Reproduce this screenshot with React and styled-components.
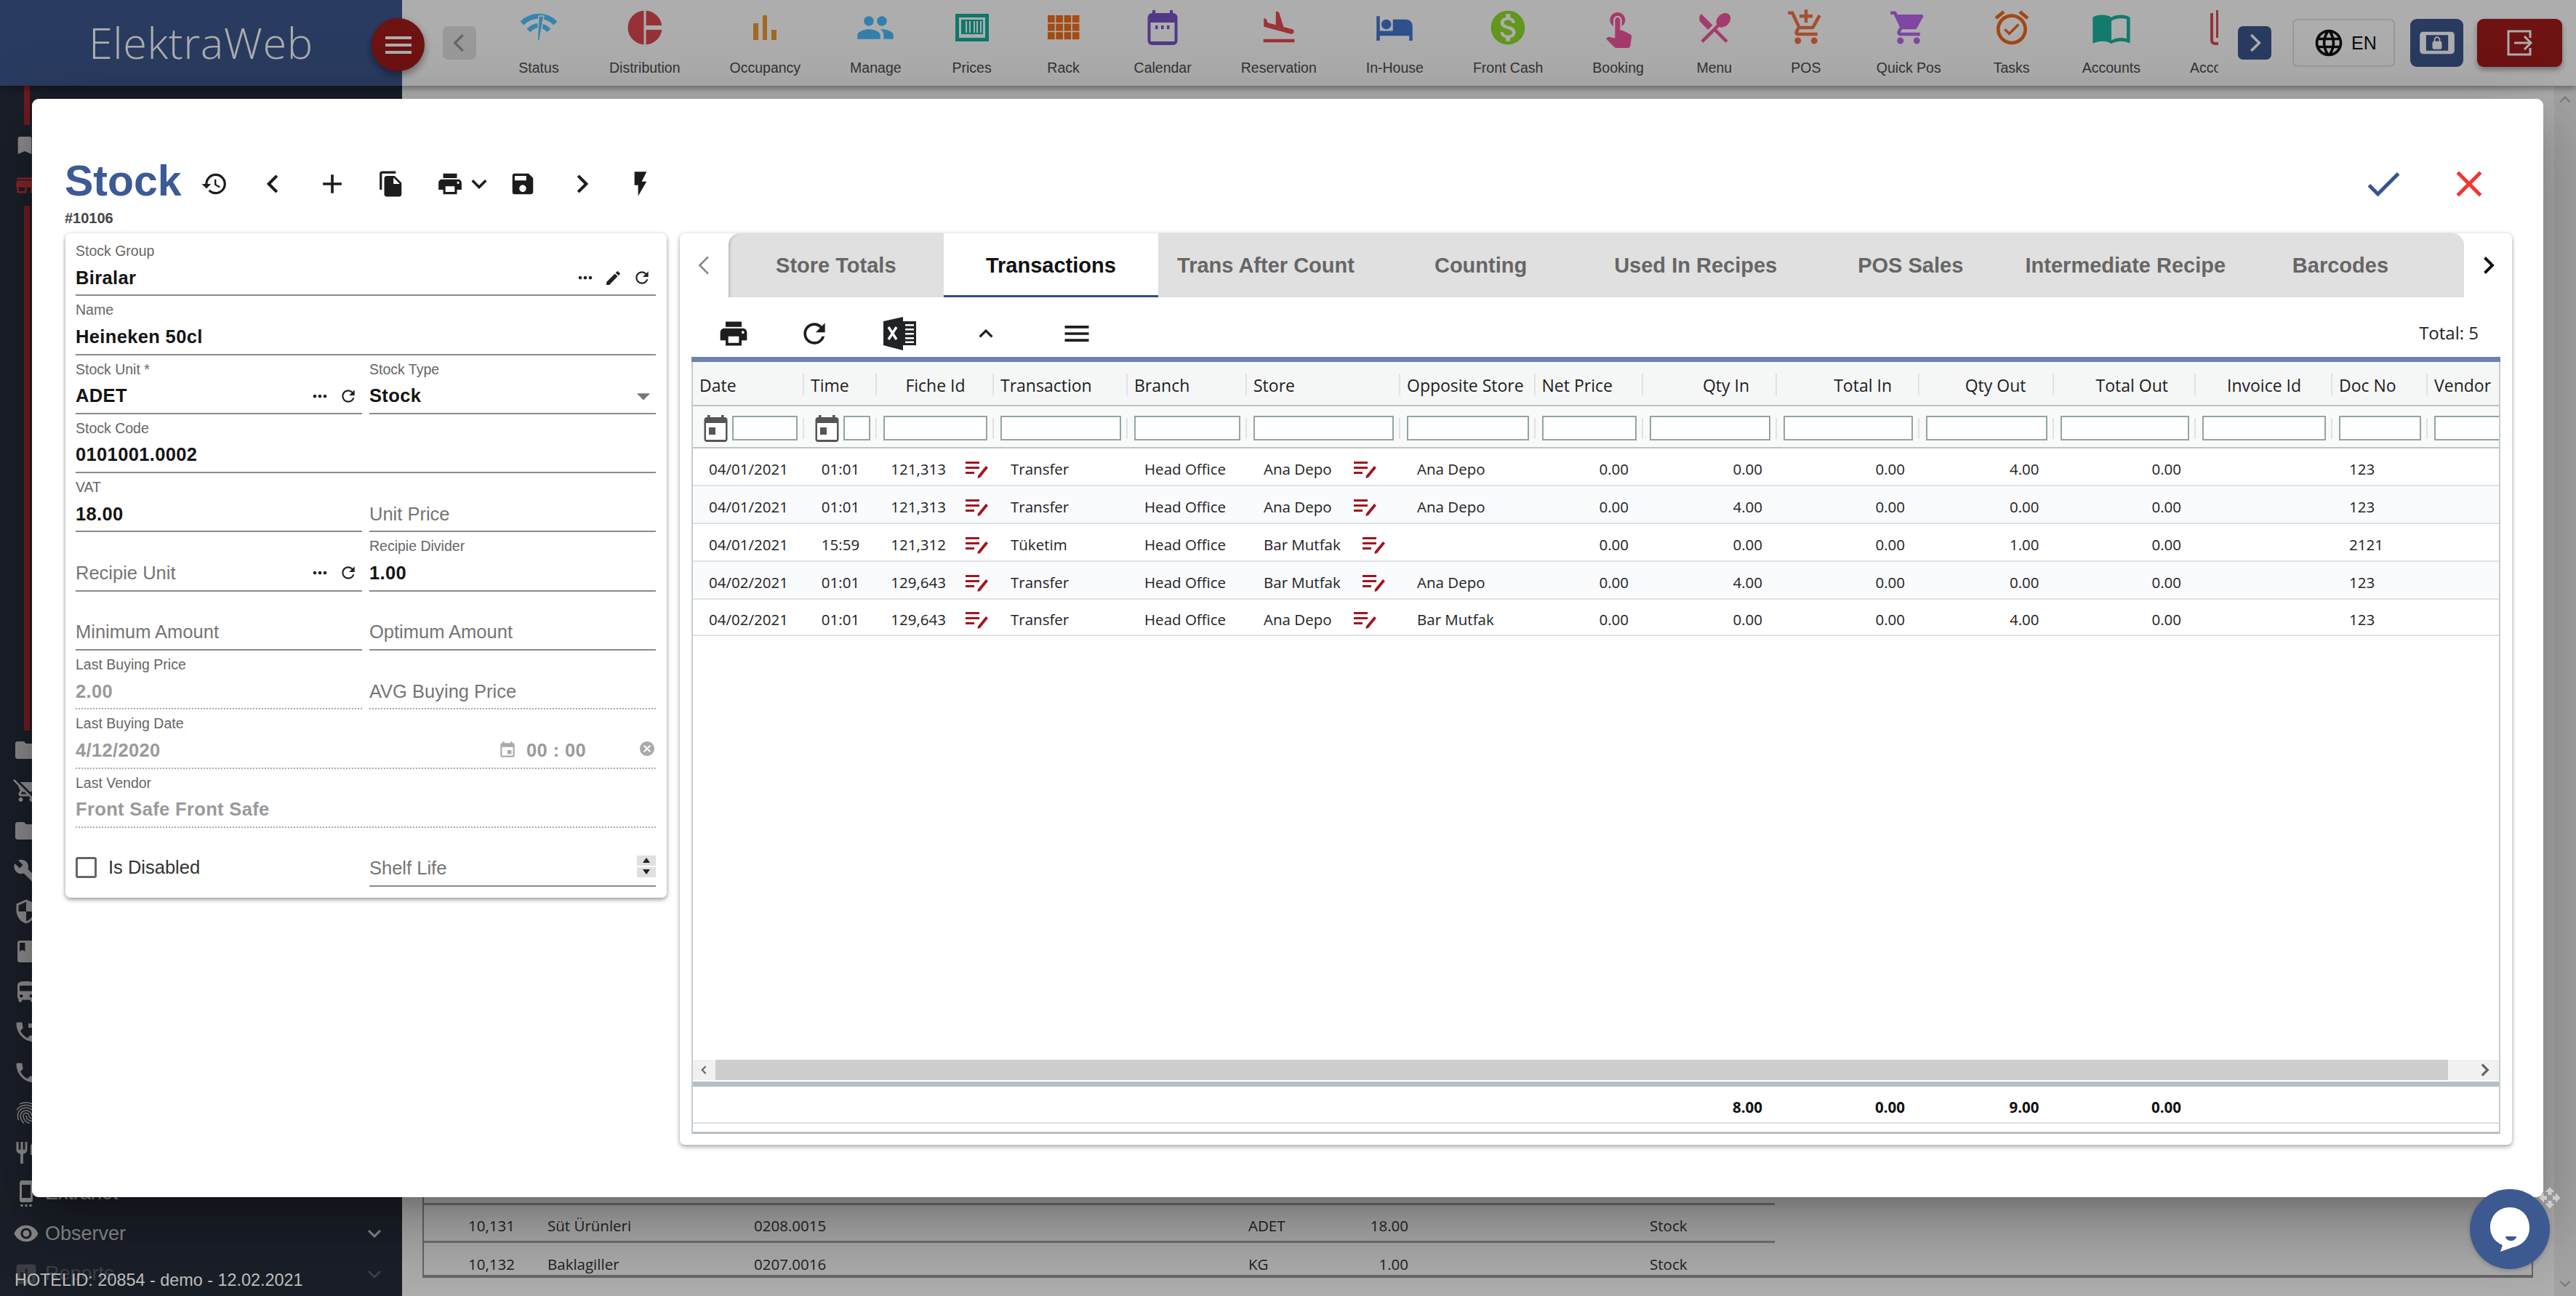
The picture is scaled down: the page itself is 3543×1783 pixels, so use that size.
import React from 'react';
import styled, { createGlobalStyle } from 'styled-components';
import {
  MdMenu, MdPeople, MdFlightLand, MdHotel, MdMonetizationOn, MdTouchApp, MdRestaurantMenu,
  MdAddShoppingCart, MdShoppingCart, MdAlarmOn, MdImportContacts, MdLanguage, MdScreenLockLandscape,
  MdHistory, MdAdd, MdFileCopy, MdPrint, MdKeyboardArrowDown, MdKeyboardArrowUp, MdSave, MdFlashOn, MdCheck, MdClose,
  MdMoreHoriz, MdEdit, MdRefresh, MdArrowDropDown, MdEvent, MdCancel, MdBookmark, MdStore, MdFolder,
  MdRemoveShoppingCart, MdBuild, MdSecurity, MdBook, MdDirectionsBus, MdPhoneForwarded, MdPhone, MdFingerprint,
  MdRestaurant, MdSettingsCell, MdVisibility, MdAssessment, MdOpenWith
} from 'react-icons/md';

const GlobalStyle = createGlobalStyle`
  html, body { margin: 0; padding: 0; height: 100%; overflow: hidden; background: #fff; }
  #root { height: 100%; }
  * { box-sizing: border-box; }
  body { font-family: "Liberation Sans", Arial, sans-serif; color: #222; }
`;

const Shell = styled.div`
  position: relative; width: 3543px; height: 1783px; overflow: hidden;
  display: flex; flex-direction: column; background: #fff;
`;
const TopBar = styled.header`
  height: 118px; flex: none; display: flex; background: #fff; position: relative; z-index: 2;
  box-shadow: 0 3px 9px rgba(0,0,0,.4);
`;
const Brand = styled.div`
  width: 553px; flex: none; background: #3f5890; position: relative;
  display: flex; align-items: center; padding: 0 0 4px 122px;
`;
const BrandName = styled.div`
  font-family: "Open Sans", sans-serif; font-weight: 300; font-size: 59.5px; color: #fff; letter-spacing: .5px;
`;
const Burger = styled.div`
  position: absolute; left: 511px; top: 25px; width: 73px; height: 73px; border-radius: 50%;
  background: #a21b1b; display: flex; align-items: center; justify-content: center; color: #fff;
  box-shadow: 0 5px 12px rgba(0,0,0,.4);
`;
const NavArea = styled.nav`
  flex: 1; min-width: 0; display: flex; align-items: center; padding: 0 19px 0 56px;
`;
const PagerButton = styled.div`
  width: 46px; height: 46px; flex: none; border-radius: 7px; display: flex; align-items: center; justify-content: center;
  margin-bottom: 0; background: ${p => (p.$on ? '#3f5890' : '#e4e4e4')}; color: ${p => (p.$on ? '#fff' : '#999')};
`;
const NavScroller = styled.div`
  flex: 1; min-width: 0; height: 118px; overflow: hidden; display: flex; margin: 0 27px 0 23px;
`;
const NavItem = styled.div`
  flex: none; padding: 14px 34px 0; display: flex; flex-direction: column; align-items: center;
`;
const NavIcon = styled.div`
  height: 48px; width: 58px; display: flex; align-items: center; justify-content: center; color: ${p => p.$c};
`;
const NavLabel = styled.div`
  margin-top: 20px; font-size: 19.5px; line-height: 22px; color: #4d4d4d; white-space: nowrap;
`;
const LangButton = styled.div`
  width: 141px; height: 66px; flex: none; margin: 0 21px 0 29px; border: 2px solid #e2e2e2; border-radius: 7px;
  display: flex; align-items: center; gap: 9px; padding-left: 28px; color: #111; font-size: 25px;
`;
const LockButton = styled.div`
  width: 73px; height: 66px; flex: none; margin-right: 19px; border-radius: 9px; background: #3f5890; color: #fff;
  display: flex; align-items: center; justify-content: center;
`;
const LogoutButton = styled.div`
  width: 117px; height: 66px; flex: none; border-radius: 9px; background: #a21b1b; color: #fff;
  display: flex; align-items: center; justify-content: center; box-shadow: 0 4px 7px rgba(0,0,0,.35);
`;

const Body = styled.div`flex: 1; min-height: 0; display: flex;`;
const Sidebar = styled.aside`
  width: 553px; flex: none; background: #282e3c; display: flex; flex-direction: column; color: #cdcdcd; overflow: hidden;
`;
const RedLine = styled.div`
  width: 8px; margin-left: 33px; height: ${p => p.$h}px; background: #a52830; flex: none;
`;
const MenuRow = styled.div`
  height: 55.4px; flex: none; display: flex; align-items: center; padding: 0 20px 0 18px; gap: 8px;
  color: ${p => p.$c || 'inherit'}; opacity: ${p => p.$dim ? .3 : 1};
`;
const MenuText = styled.span`font-size: 27px; flex: 1;`;
const HotelId = styled.div`
  position: absolute; left: 20px; top: 1746px; font-size: 23.4px; line-height: 30px; color: #bdbdbd; z-index: 30;
`;

const Content = styled.main`flex: 1; min-width: 0; display: flex;`;
const ContentMain = styled.div`
  flex: 1; min-width: 0; display: flex; flex-direction: column; justify-content: flex-end;
  padding: 0 29px 25px 28px;
`;
const BackTable = styled.div`
  border-left: 2px solid #999; border-right: 2px solid #999; border-bottom: 4px solid #999;
`;
const BackRow = styled.div`
  width: 1858px; height: ${p => (p.$last ? 44 : 52)}px; display: grid; align-items: center;
  grid-template-columns: 125px 329px 680px 100px 120px 330px;
  border-bottom: ${p => (p.$last ? '0' : '3px solid #aaa')};
  padding-top: ${p => (p.$last ? 14 : 6)}px;
  font-family: "Open Sans", sans-serif; font-size: 20.5px; color: #333;
`;
const BackCell = styled.div`
  text-align: ${p => (p.$right ? 'right' : 'left')}; padding-left: ${p => p.$pl || 0}px; white-space: nowrap;
`;
const ScrollTrack = styled.div`
  width: 30px; flex: none; background: #f1f1f1; display: flex; flex-direction: column; justify-content: space-between;
  align-items: center; padding: 4px 0 2px; color: #bbb;
`;

const Overlay = styled.div`position: absolute; inset: 0; background: rgba(0,0,0,.32); z-index: 10;`;
const Dialog = styled.section`
  position: absolute; left: 44px; top: 136px; width: 3454px; height: 1511px; z-index: 20; background: #fff; border-radius: 9px;
  padding: 83px 43px 0 45px; display: flex; flex-direction: column;
  box-shadow: 0 25px 34px -16px rgba(0,0,0,.2), 0 54px 86px 7px rgba(0,0,0,.14), 0 20px 104px 18px rgba(0,0,0,.12);
`;
const DialogHead = styled.div`display: flex; align-items: center; height: 68px; flex: none;`;
const Title = styled.h1`
  margin: 0 5px 8px 0; font-size: 59px; line-height: 68px; font-weight: 700; color: #3c5a96; width: 160px; white-space: nowrap;
`;
const IconButton = styled.div`
  width: ${p => p.$w || 81}px; height: 68px; flex: none; display: flex; align-items: center; justify-content: center;
  color: ${p => p.$c || '#1c1c1c'};
`;
const HeadSpacer = styled.div`flex: 1;`;
const RecordId = styled.div`
  height: 24px; margin: 1px 0 9px; font-size: 20px; line-height: 24px; font-weight: 700; color: #444; flex: none;
`;
const Columns = styled.div`flex: 1; min-height: 0; display: flex; align-items: flex-start; gap: 18px;`;

const FormCard = styled.div`
  width: 827px; height: 914px; flex: none; margin-left: 1px; background: #fff; border-radius: 7px; padding: 5px 15px 0 14px;
  box-shadow: 0 3px 6px rgba(0,0,0,.35), 0 0 5px rgba(0,0,0,.1);
`;
const FormGrid = styled.div`display: grid; grid-template-columns: 1fr 1fr; column-gap: 10px;`;
const Field = styled.div`
  height: 81.3px; min-width: 0; display: flex; flex-direction: column;
  grid-column: ${p => (p.$wide ? 'span 2' : 'auto')};
  border-bottom: ${p => (p.$bare ? '0' : p.$off ? '2.5px dotted #aaa' : '2.5px solid #8a8a8a')};
`;
const FieldLabel = styled.div`height: 39px; line-height: 39px; font-size: 19.5px; color: #666; white-space: nowrap;`;
const FieldLine = styled.div`height: 34px; display: flex; align-items: center; min-width: 0;`;
const FieldValue = styled.div`
  flex: 1; min-width: 0; font-size: 25.5px; letter-spacing: ${p => (p.$hint ? 0 : .35)}px; white-space: nowrap;
  font-weight: ${p => (p.$hint ? 400 : 700)};
  color: ${p => (p.$hint ? '#757575' : p.$off ? '#9a9a9a' : '#141414')};
`;
const Adorn = styled.div`
  width: 39px; height: 34px; flex: none; display: flex; align-items: center; justify-content: center; color: #222;
`;
const SelectArrow = styled.div`margin-right: -5px; display: flex; color: #777;`;
const DateCal = styled.div`width: 26px; flex: none; margin-right: 13px; display: flex; color: #aaa;`;
const TimeText = styled.div`width: 154px; font-size: 25.5px; font-weight: 700; letter-spacing: .4px; color: #9a9a9a; white-space: pre;`;
const ClearIcon = styled.div`display: flex; color: #aaa; margin-top: -5px;`;
const CheckLine = styled.div`display: flex; align-items: center; gap: 16px; height: 100%; padding-top: 28px;`;
const CheckBox = styled.div`width: 29px; height: 29px; border: 3.5px solid #666; border-radius: 3px;`;
const CheckText = styled.div`font-size: 25.5px; color: #333;`;
const Spinner = styled.div`width: 26px; height: 30px; flex: none; display: flex; flex-direction: column; gap: 2px; margin-top: -6px;`;
const SpinPart = styled.div`
  flex: 1; background: #e0e0e0; display: flex; align-items: center; justify-content: center;
  &::before {
    content: ""; border-left: 5px solid transparent; border-right: 5px solid transparent;
    ${p => (p.$up ? 'border-bottom: 7px solid #222;' : 'border-top: 7px solid #222;')}
  }
`;

const GridCard = styled.div`
  flex: 1; min-width: 0; height: 1254px; background: #fff; border-radius: 7px; display: flex; flex-direction: column;
  box-shadow: 0 3px 6px rgba(0,0,0,.3), 0 0 5px rgba(0,0,0,.1);
`;
const TabsRow = styled.div`height: 88px; flex: none; display: flex;`;
const TabArrow = styled.div`
  width: ${p => p.$w}px; flex: none; display: flex; align-items: center; justify-content: center; padding-bottom: 0; color: ${p => p.$c};
`;
const TabStrip = styled.div`
  flex: 1; min-width: 0; display: flex; background: #e0e0e0; border-radius: 16px 16px 0 0; overflow: hidden;
  box-shadow: inset 4px 0 4px -3px rgba(0,0,0,.25);
`;
const Tab = styled.div`
  width: 295.6px; flex: none; display: flex; align-items: center; justify-content: center; padding-top: 3px;
  font-size: 29px; font-weight: 700; white-space: nowrap;
  color: ${p => (p.$on ? '#111' : '#666')}; background: ${p => (p.$on ? '#fff' : 'transparent')};
  border-bottom: 3px solid ${p => (p.$on ? '#2f4d8e' : 'transparent')};
`;
const GridBox = styled.div`flex: 1; min-height: 0; display: flex; flex-direction: column; margin: 0 16px 15px;`;
const GridTools = styled.div`height: 82px; flex: none; display: flex; align-items: center; padding-top: 18px; color: #1d1d1d;`;
const ToolBox = styled.div`width: ${p => p.$w}px; flex: none; display: flex; align-items: center; justify-content: center;`;
const TotalText = styled.div`
  margin-left: auto; padding: 0 30px 4px 0; font-family: "Open Sans", sans-serif; font-size: 24px; color: #222;
`;
const Band = styled.div`height: ${p => p.$h}px; flex: none; background: ${p => p.$c};`;
const GridFrame = styled.div`
  flex: 1; min-height: 0; display: flex; flex-direction: column; overflow: hidden;
  border-left: 2px solid #c6cdd1; border-right: 2px solid #c6cdd1;
  font-family: "Open Sans", sans-serif;
`;
const COLS = [153, 100, 161, 184, 164, 211, 185.5, 148.5, 184, 196, 184.5, 195.5, 188, 131, 200];
const template = COLS.map(w => `${w}px`).join(' ');
const GridRow = styled.div`
  display: grid; grid-template-columns: ${template}; flex: none;
  height: ${p => p.$h}px; background: ${p => p.$bg || '#fff'};
  border-bottom: ${p => p.$line || '0'};
`;
const justify = { left: 'flex-start', right: 'flex-end', center: 'center' };
const HeadCell = styled.div`
  position: relative; display: flex; align-items: center; white-space: nowrap; overflow: hidden;
  justify-content: ${p => justify[p.$a]};
  padding: 4px ${p => (p.$a === 'right' ? 38 : 0)}px 0 ${p => (p.$a === 'left' ? 9 : 0)}px;
  font-size: 23px; color: #1d1d1d;
  &::after { content: ""; position: absolute; right: 0; top: 16px; height: 30px; width: 2px; background: #e0e3e5; }
`;
const FilterCell = styled.div`
  position: relative; display: flex; align-items: center; gap: 6px; padding: 4px 9px 0 ${p => (p.$cal ? 14.5 : 9)}px;
  &::after { content: ""; position: absolute; right: 0; top: 16px; height: 29px; width: 2px; background: #e0e3e5; }
`;
const FilterInput = styled.input`
  flex: 1; min-width: 0; height: 34px; border: 2px solid #92a5a5; background: #fff; padding: 0; outline: none; border-radius: 0;
`;
const Cell = styled.div`
  display: flex; align-items: center; white-space: nowrap; overflow: hidden;
  justify-content: ${p => justify[p.$a]};
  padding: 6px ${p => (p.$a === 'right' ? 20 : 0)}px 0 ${p => (p.$a === 'left' ? 23 : 0)}px;
  font-size: 20.5px; color: #222;
`;
const IdCell = styled(Cell)`padding-right: 8px;`;
const EditGlyph = styled.svg`width: 31px; height: 23px; flex: none; margin-left: ${p => p.$ml}px; margin-top: 3px;`;
const GridBlank = styled.div`flex: 1; min-height: 0;`;
const Scroller = styled.div`height: 28px; flex: none; display: flex; background: #f1f1f1; margin-bottom: 2px;`;
const ScrollEnd = styled.div`
  width: ${p => p.$w}px; flex: none; display: flex; align-items: center; justify-content: ${p => p.$j}; padding: 0 7px; color: #666;
`;
const ScrollThumb = styled.div`flex: 1; background: #cdcdcd;`;
const TotalCell = styled(Cell)`font-weight: 700; color: #111;`;

const ChatButton = styled.div`
  position: absolute; left: 3396.5px; top: 1636px; width: 110px; height: 110px; border-radius: 50%; background: #3d5a90;
  z-index: 40; display: flex; align-items: center; justify-content: center; box-shadow: 0 2px 6px rgba(0,0,0,.2);
`;
const MoveHandle = styled.div`
  position: absolute; left: 3491px; top: 1632px; z-index: 41; display: flex; color: #ccc;
`;

const Chevron = ({ dir = 'left', size = 36, sw = 2.4, color = 'currentColor' }) => {
  const pts = { left: '15 5 8 12 15 19', right: '9 5 16 12 9 19' }[dir];
  return (
    <svg width={size} height={size} viewBox="0 0 24 24" fill="none" stroke={color} strokeWidth={sw}>
      <polyline points={pts} />
    </svg>
  );
};

const StatusIcon = () => (
  <svg width="52" height="40" viewBox="0 0 52 40">
    <path d="M3 14 C16 1 36 1 49 14" fill="none" stroke="#4ec4ff" strokeWidth="7" />
    <path d="M12 24 C20 15 32 15 40 24" fill="none" stroke="#4ec4ff" strokeWidth="6.5" />
    <path d="M26 4 L33 4 L27 38 L24 38 Z" fill="#4ec4ff" stroke="#fff" strokeWidth="1.6" />
  </svg>
);
const DistributionIcon = () => (
  <svg width="48" height="48" viewBox="0 0 48 48">
    <circle cx="24" cy="24" r="23.5" fill="#dc4a52" />
    <rect x="22.5" y="0" width="3" height="48" fill="#fff" />
    <rect x="24" y="21" width="24" height="6" fill="#fff" />
  </svg>
);
const OccupancyIcon = () => (
  <svg width="34" height="34" viewBox="0 0 34 34" fill="#f09a2e">
    <rect x="1" y="11" width="7" height="23" /><rect x="14" y="0" width="6" height="34" /><rect x="26" y="20" width="7" height="14" />
  </svg>
);
const PricesIcon = () => (
  <svg width="46" height="38" viewBox="0 0 46 38" fill="#15b09e">
    <path d="M0 0H46V38H0Z M5 5V33H41V5Z" fillRule="evenodd" />
    <rect x="8" y="8" width="30" height="20" />
    <g fill="#fff">
      <rect x="14" y="10" width="2" height="16" />
      <rect x="19" y="10" width="2" height="16" /><rect x="25" y="10" width="2" height="16" />
      <rect x="29" y="10" width="2" height="16" /><rect x="34" y="10" width="2" height="16" />
    </g>
  </svg>
);
const RackIcon = () => {
  const bricks = [];
  [0, 1, 2].forEach(r => [0, 1, 2, 3].forEach(c => bricks.push(<rect key={`${r}${c}`} x={c * 11.3} y={r * 11.6} width="9.6" height="10" />)));
  return <svg width="44" height="34" viewBox="0 0 44 34" fill="#f56f1c">{bricks}</svg>;
};
const CalendarIcon = () => (
  <svg width="42" height="48" viewBox="0 0 42 48">
    <rect x="7" y="0" width="4" height="8" fill="#7a55c8" /><rect x="31" y="0" width="4" height="8" fill="#7a55c8" />
    <rect x="0.5" y="4" width="41" height="44" rx="6" fill="#7a55c8" />
    <rect x="4.5" y="17" width="33" height="26" fill="#fff" />
    <g fill="#7a55c8"><rect x="11" y="21" width="3.5" height="5" /><rect x="19" y="21" width="3.5" height="5" /><rect x="27" y="21" width="3.5" height="5" /></g>
  </svg>
);
const AccountingIcon = () => (
  <svg width="48" height="48" viewBox="0 0 48 48" fill="none" stroke="#dc4a52" strokeWidth="4">
    <path d="M6 4 V41 Q6 46 11 46 H48" /><path d="M14 0 V36 H48" />
  </svg>
);
const ChatGlyph = () => (
  <svg width="58" height="64" viewBox="0 0 58 64">
    <path d="M29 2 C45 2 56 14 56 30 C56 45 45 55 33 57 L16 63 L19 54 C9 50 2 41 2 30 C2 14 13 2 29 2 Z" fill="#fff" />
    <path d="M23 42 H38 C37 50 24 50 23 42 Z" fill="#3d5a90" />
  </svg>
);
const LogoutGlyph = () => (
  <svg width="36" height="36" viewBox="0 0 36 36" fill="none" stroke="#fff" strokeWidth="3">
    <path d="M32 11 V2 H2 V34 H32 V25" /><path d="M10 18 H32" /><path d="M24 9 L33 18 L24 27" />
  </svg>
);
const ExcelGlyph = () => (
  <svg width="46" height="46" viewBox="0 0 46 46">
    <path d="M0 6 L27 0 V46 L0 39 Z" fill="#1f2326" />
    <path d="M7 14 L18 31 M18 14 L7 31" stroke="#fff" strokeWidth="3.4" fill="none" />
    <rect x="27" y="6" width="18" height="33" fill="#1f2326" />
    <g fill="#fff"><rect x="30" y="10" width="12" height="2.5" /><rect x="30" y="16" width="12" height="2.5" /><rect x="30" y="22" width="12" height="2.5" /><rect x="30" y="28" width="12" height="2.5" /><rect x="30" y="33.5" width="12" height="2.5" /></g>
  </svg>
);
const FilterCalendar = () => (
  <svg width="33" height="37" viewBox="0 0 33 37" style={{ flex: 'none' }}>
    <rect x="5" y="0" width="3.5" height="6" fill="#555" /><rect x="24" y="0" width="3.5" height="6" fill="#555" />
    <rect x="0.5" y="3" width="32" height="34" rx="4" fill="#555" />
    <rect x="3" y="11" width="27" height="23" fill="#fff" />
    <rect x="7" y="17" width="9" height="10" fill="#555" />
  </svg>
);
const EditIcon = ({ ml = 0 }) => (
  <EditGlyph $ml={ml} viewBox="0 0 31 23">
    <g fill="#a2141e">
      <rect x="0" y="0" width="19" height="3" /><rect x="0" y="7" width="19" height="3" /><rect x="0" y="14" width="12" height="3" />
      <path d="M28 6 L31 8.5 L20 22 L16.5 23 L17 19.5 Z" />
    </g>
  </EditGlyph>
);

const navItems = [
  ['Status', '', <StatusIcon />],
  ['Distribution', '', <DistributionIcon />],
  ['Occupancy', '', <OccupancyIcon />],
  ['Manage', '#4dbdff', <MdPeople size={54} />],
  ['Prices', '', <PricesIcon />],
  ['Rack', '', <RackIcon />],
  ['Calendar', '', <CalendarIcon />],
  ['Reservation', '#e84a52', <MdFlightLand size={54} />],
  ['In-House', '#4577cf', <MdHotel size={54} />],
  ['Front Cash', '#92dd2c', <MdMonetizationOn size={56} />],
  ['Booking', '#f4579f', <MdTouchApp size={56} />],
  ['Menu', '#f4579f', <MdRestaurantMenu size={54} />],
  ['POS', '#f57348', <MdAddShoppingCart size={54} />],
  ['Quick Pos', '#bb68f0', <MdShoppingCart size={54} />],
  ['Tasks', '#f06a1c', <MdAlarmOn size={56} />],
  ['Accounts', '#1cb5a3', <MdImportContacts size={56} />],
  ['Accounting', '', <AccountingIcon />],
];

const menuIcons = [MdFolder, MdRemoveShoppingCart, MdFolder, MdBuild, MdSecurity, MdBook, MdDirectionsBus, MdPhoneForwarded, MdPhone, MdFingerprint, MdRestaurant];

const tabs = ['Store Totals', 'Transactions', 'Trans After Count', 'Counting', 'Used In Recipes', 'POS Sales', 'Intermediate Recipe', 'Barcodes'];

const heads = [
  ['Date', 'left'], ['Time', 'left'], ['Fiche Id', 'center'], ['Transaction', 'left'], ['Branch', 'left'], ['Store', 'left'],
  ['Opposite Store', 'left'], ['Net Price', 'left'], ['Qty In', 'right'], ['Total In', 'right'], ['Qty Out', 'right'],
  ['Total Out', 'right'], ['Invoice Id', 'center'], ['Doc No', 'left'], ['Vendor', 'left'],
];

const rows = [
  ['04/01/2021', '01:01', '121,313', 'Transfer', 'Ana Depo', 'Ana Depo', '0.00', '0.00', '0.00', '4.00', '0.00', '123'],
  ['04/01/2021', '01:01', '121,313', 'Transfer', 'Ana Depo', 'Ana Depo', '0.00', '4.00', '0.00', '0.00', '0.00', '123'],
  ['04/01/2021', '15:59', '121,312', 'Tüketim', 'Bar Mutfak', '', '0.00', '0.00', '0.00', '1.00', '0.00', '2121'],
  ['04/02/2021', '01:01', '129,643', 'Transfer', 'Bar Mutfak', 'Ana Depo', '0.00', '4.00', '0.00', '0.00', '0.00', '123'],
  ['04/02/2021', '01:01', '129,643', 'Transfer', 'Ana Depo', 'Bar Mutfak', '0.00', '0.00', '0.00', '4.00', '0.00', '123'],
];

const LookupTools = ({ edit }) => (
  <>
    <Adorn><MdMoreHoriz size={28} /></Adorn>
    {edit && <Adorn><MdEdit size={25} /></Adorn>}
    <Adorn><MdRefresh size={26} /></Adorn>
  </>
);

const TextField = ({ label, value, hint, off, wide, children }) => (
  <Field $off={off} $wide={wide}>
    <FieldLabel>{label}</FieldLabel>
    <FieldLine>
      <FieldValue $hint={hint} $off={off}>{value || hint}</FieldValue>
      {children}
    </FieldLine>
  </Field>
);

export default function App() {
  return (
    <Shell>
      <GlobalStyle />
      <TopBar>
        <Brand>
          <BrandName>ElektraWeb</BrandName>
          <Burger><MdMenu size={48} /></Burger>
        </Brand>
        <NavArea>
          <PagerButton><Chevron size={38} sw={2.2} /></PagerButton>
          <NavScroller>
            {navItems.map(([label, c, icon]) => (
              <NavItem key={label}>
                <NavIcon $c={c}>{icon}</NavIcon>
                <NavLabel>{label}</NavLabel>
              </NavItem>
            ))}
          </NavScroller>
          <PagerButton $on><Chevron dir="right" size={38} sw={2.2} /></PagerButton>
          <LangButton><MdLanguage size={44} style={{ marginLeft: -2 }} />EN</LangButton>
          <LockButton><MdScreenLockLandscape size={52} /></LockButton>
          <LogoutButton><LogoutGlyph /></LogoutButton>
        </NavArea>
      </TopBar>

      <Body>
        <Sidebar>
          <RedLine $h={54} />
          <MenuRow><MdBookmark size={32} /></MenuRow>
          <MenuRow $c="#c4363e"><MdStore size={32} /></MenuRow>
          <RedLine $h={722} />
          {menuIcons.map((Icon, i) => (
            <MenuRow key={i}><Icon size={36} /></MenuRow>
          ))}
          <MenuRow><MdSettingsCell size={36} /><MenuText>Extranet</MenuText></MenuRow>
          <MenuRow><MdVisibility size={36} /><MenuText>Observer</MenuText><MdKeyboardArrowDown size={36} /></MenuRow>
          <MenuRow $dim><MdAssessment size={36} /><MenuText>Reports</MenuText><MdKeyboardArrowDown size={36} /></MenuRow>
        </Sidebar>
        <Content>
          <ContentMain>
            <BackTable>
              <BackRow />
              <BackRow>
                <BackCell $right>10,131</BackCell><BackCell $pl={45}>Süt Ürünleri</BackCell><BackCell>0208.0015</BackCell>
                <BackCell>ADET</BackCell><BackCell $right>18.00</BackCell><BackCell $pl={332}>Stock</BackCell>
              </BackRow>
              <BackRow $last>
                <BackCell $right>10,132</BackCell><BackCell $pl={45}>Baklagiller</BackCell><BackCell>0207.0016</BackCell>
                <BackCell>KG</BackCell><BackCell $right>1.00</BackCell><BackCell $pl={332}>Stock</BackCell>
              </BackRow>
            </BackTable>
          </ContentMain>
          <ScrollTrack><MdKeyboardArrowUp size={30} /><MdKeyboardArrowDown size={30} /></ScrollTrack>
        </Content>
      </Body>

      <HotelId>HOTELID: 20854 - demo - 12.02.2021</HotelId>
      <Overlay />

      <Dialog>
        <DialogHead>
          <Title>Stock</Title>
          <IconButton><MdHistory size={38} /></IconButton>
          <IconButton><Chevron size={38} sw={2.6} /></IconButton>
          <IconButton><MdAdd size={44} /></IconButton>
          <IconButton><MdFileCopy size={38} /></IconButton>
          <IconButton $w={100}><MdPrint size={38} /><MdKeyboardArrowDown size={42} style={{ marginRight: -24 }} /></IconButton>
          <IconButton $w={81}><MdSave size={38} /></IconButton>
          <IconButton><Chevron dir="right" size={38} sw={2.6} /></IconButton>
          <IconButton><MdFlashOn size={40} /></IconButton>
          <HeadSpacer />
          <IconButton $w={118} $c="#34548f"><MdCheck size={60} /></IconButton>
          <IconButton $w={118} $c="#f2352e"><MdClose size={60} /></IconButton>
        </DialogHead>
        <RecordId>#10106</RecordId>
        <Columns>
          <FormCard>
            <FormGrid>
              <TextField wide label="Stock Group" value="Biralar"><LookupTools edit /></TextField>
              <TextField wide label="Name" value="Heineken 50cl" />
              <TextField label="Stock Unit *" value="ADET"><LookupTools /></TextField>
              <TextField label="Stock Type" value="Stock"><SelectArrow><MdArrowDropDown size={44} /></SelectArrow></TextField>
              <TextField wide label="Stock Code" value="0101001.0002" />
              <TextField label="VAT" value="18.00" />
              <TextField hint="Unit Price" />
              <TextField hint="Recipie Unit"><LookupTools /></TextField>
              <TextField label="Recipie Divider" value="1.00" />
              <TextField hint="Minimum Amount" />
              <TextField hint="Optimum Amount" />
              <TextField off label="Last Buying Price" value="2.00" />
              <TextField off hint="AVG Buying Price" />
              <TextField off wide label="Last Buying Date" value="4/12/2020">
                <DateCal><MdEvent size={26} /></DateCal>
                <TimeText>00 : 00</TimeText>
                <ClearIcon><MdCancel size={24} /></ClearIcon>
              </TextField>
              <TextField off wide label="Last Vendor" value="Front Safe Front Safe" />
              <Field $bare>
                <CheckLine><CheckBox /><CheckText>Is Disabled</CheckText></CheckLine>
              </Field>
              <TextField hint="Shelf Life">
                <Spinner><SpinPart $up /><SpinPart /></Spinner>
              </TextField>
            </FormGrid>
          </FormCard>

          <GridCard>
            <TabsRow>
              <TabArrow $w={67} $c="#888"><Chevron size={40} sw={1.6} /></TabArrow>
              <TabStrip>
                {tabs.map((t, i) => <Tab key={t} $on={i === 1}>{t}</Tab>)}
              </TabStrip>
              <TabArrow $w={66} $c="#111"><Chevron dir="right" size={36} sw={2.6} /></TabArrow>
            </TabsRow>
            <GridBox>
              <GridTools>
                <ToolBox $w={116}><MdPrint size={44} /></ToolBox>
                <ToolBox $w={106}><MdRefresh size={44} /></ToolBox>
                <ToolBox $w={130}><ExcelGlyph /></ToolBox>
                <ToolBox $w={106}><MdKeyboardArrowUp size={38} /></ToolBox>
                <ToolBox $w={144}><MdMenu size={44} /></ToolBox>
                <TotalText>Total: 5</TotalText>
              </GridTools>
              <Band $h={7} $c="#6d82ad" />
              <GridFrame>
                <GridRow $h={61} $bg="#f5f6f6" $line="2px solid #bcc3c7">
                  {heads.map(([label, a]) => <HeadCell key={label} $a={a}>{label}</HeadCell>)}
                </GridRow>
                <GridRow $h={58} $bg="#f8f9f9" $line="2px solid #bcc3c7">
                  {heads.map(([label], i) => (
                    <FilterCell key={label} $cal={i < 2}>
                      {i < 2 && <FilterCalendar />}
                      <FilterInput readOnly aria-label={label} />
                    </FilterCell>
                  ))}
                </GridRow>
                {rows.map((r, i) => (
                  <GridRow key={i} $h={i === 4 ? 50 : 52} $bg={i % 2 ? '#fafbfd' : '#fff'} $line="2px solid #dfe2e5">
                    <Cell $a="center">{r[0]}</Cell>
                    <Cell $a="center">{r[1]}</Cell>
                    <IdCell $a="right">{r[2]}<EditIcon ml={27} /></IdCell>
                    <Cell $a="left">{r[3]}</Cell>
                    <Cell $a="left">Head Office</Cell>
                    <Cell $a="left">{r[4]}<EditIcon ml={30} /></Cell>
                    <Cell $a="left">{r[5]}</Cell>
                    <Cell $a="right">{r[6]}</Cell>
                    <Cell $a="right">{r[7]}</Cell>
                    <Cell $a="right">{r[8]}</Cell>
                    <Cell $a="right">{r[9]}</Cell>
                    <Cell $a="right">{r[10]}</Cell>
                    <Cell $a="left" />
                    <Cell $a="left">{r[11]}</Cell>
                    <Cell $a="left" />
                  </GridRow>
                ))}
                <GridBlank />
                <Scroller>
                  <ScrollEnd $w={31} $j="center"><Chevron size={26} sw={3} /></ScrollEnd>
                  <ScrollThumb />
                  <ScrollEnd $w={70} $j="flex-end"><Chevron dir="right" size={26} sw={3} /></ScrollEnd>
                </Scroller>
                <Band $h={7} $c="#b7bfc5" />
                <GridRow $h={51} $line="2px solid #ddd">
                  {COLS.map((_, i) => (
                    <TotalCell key={i} $a="right">{{ 8: '8.00', 9: '0.00', 10: '9.00', 11: '0.00' }[i]}</TotalCell>
                  ))}
                </GridRow>
                <GridRow $h={11} />
                <Band $h={3} $c="#b7bfc5" />
              </GridFrame>
            </GridBox>
          </GridCard>
        </Columns>
      </Dialog>

      <MoveHandle><MdOpenWith size={32} /></MoveHandle>
      <ChatButton><ChatGlyph /></ChatButton>
    </Shell>
  );
}
